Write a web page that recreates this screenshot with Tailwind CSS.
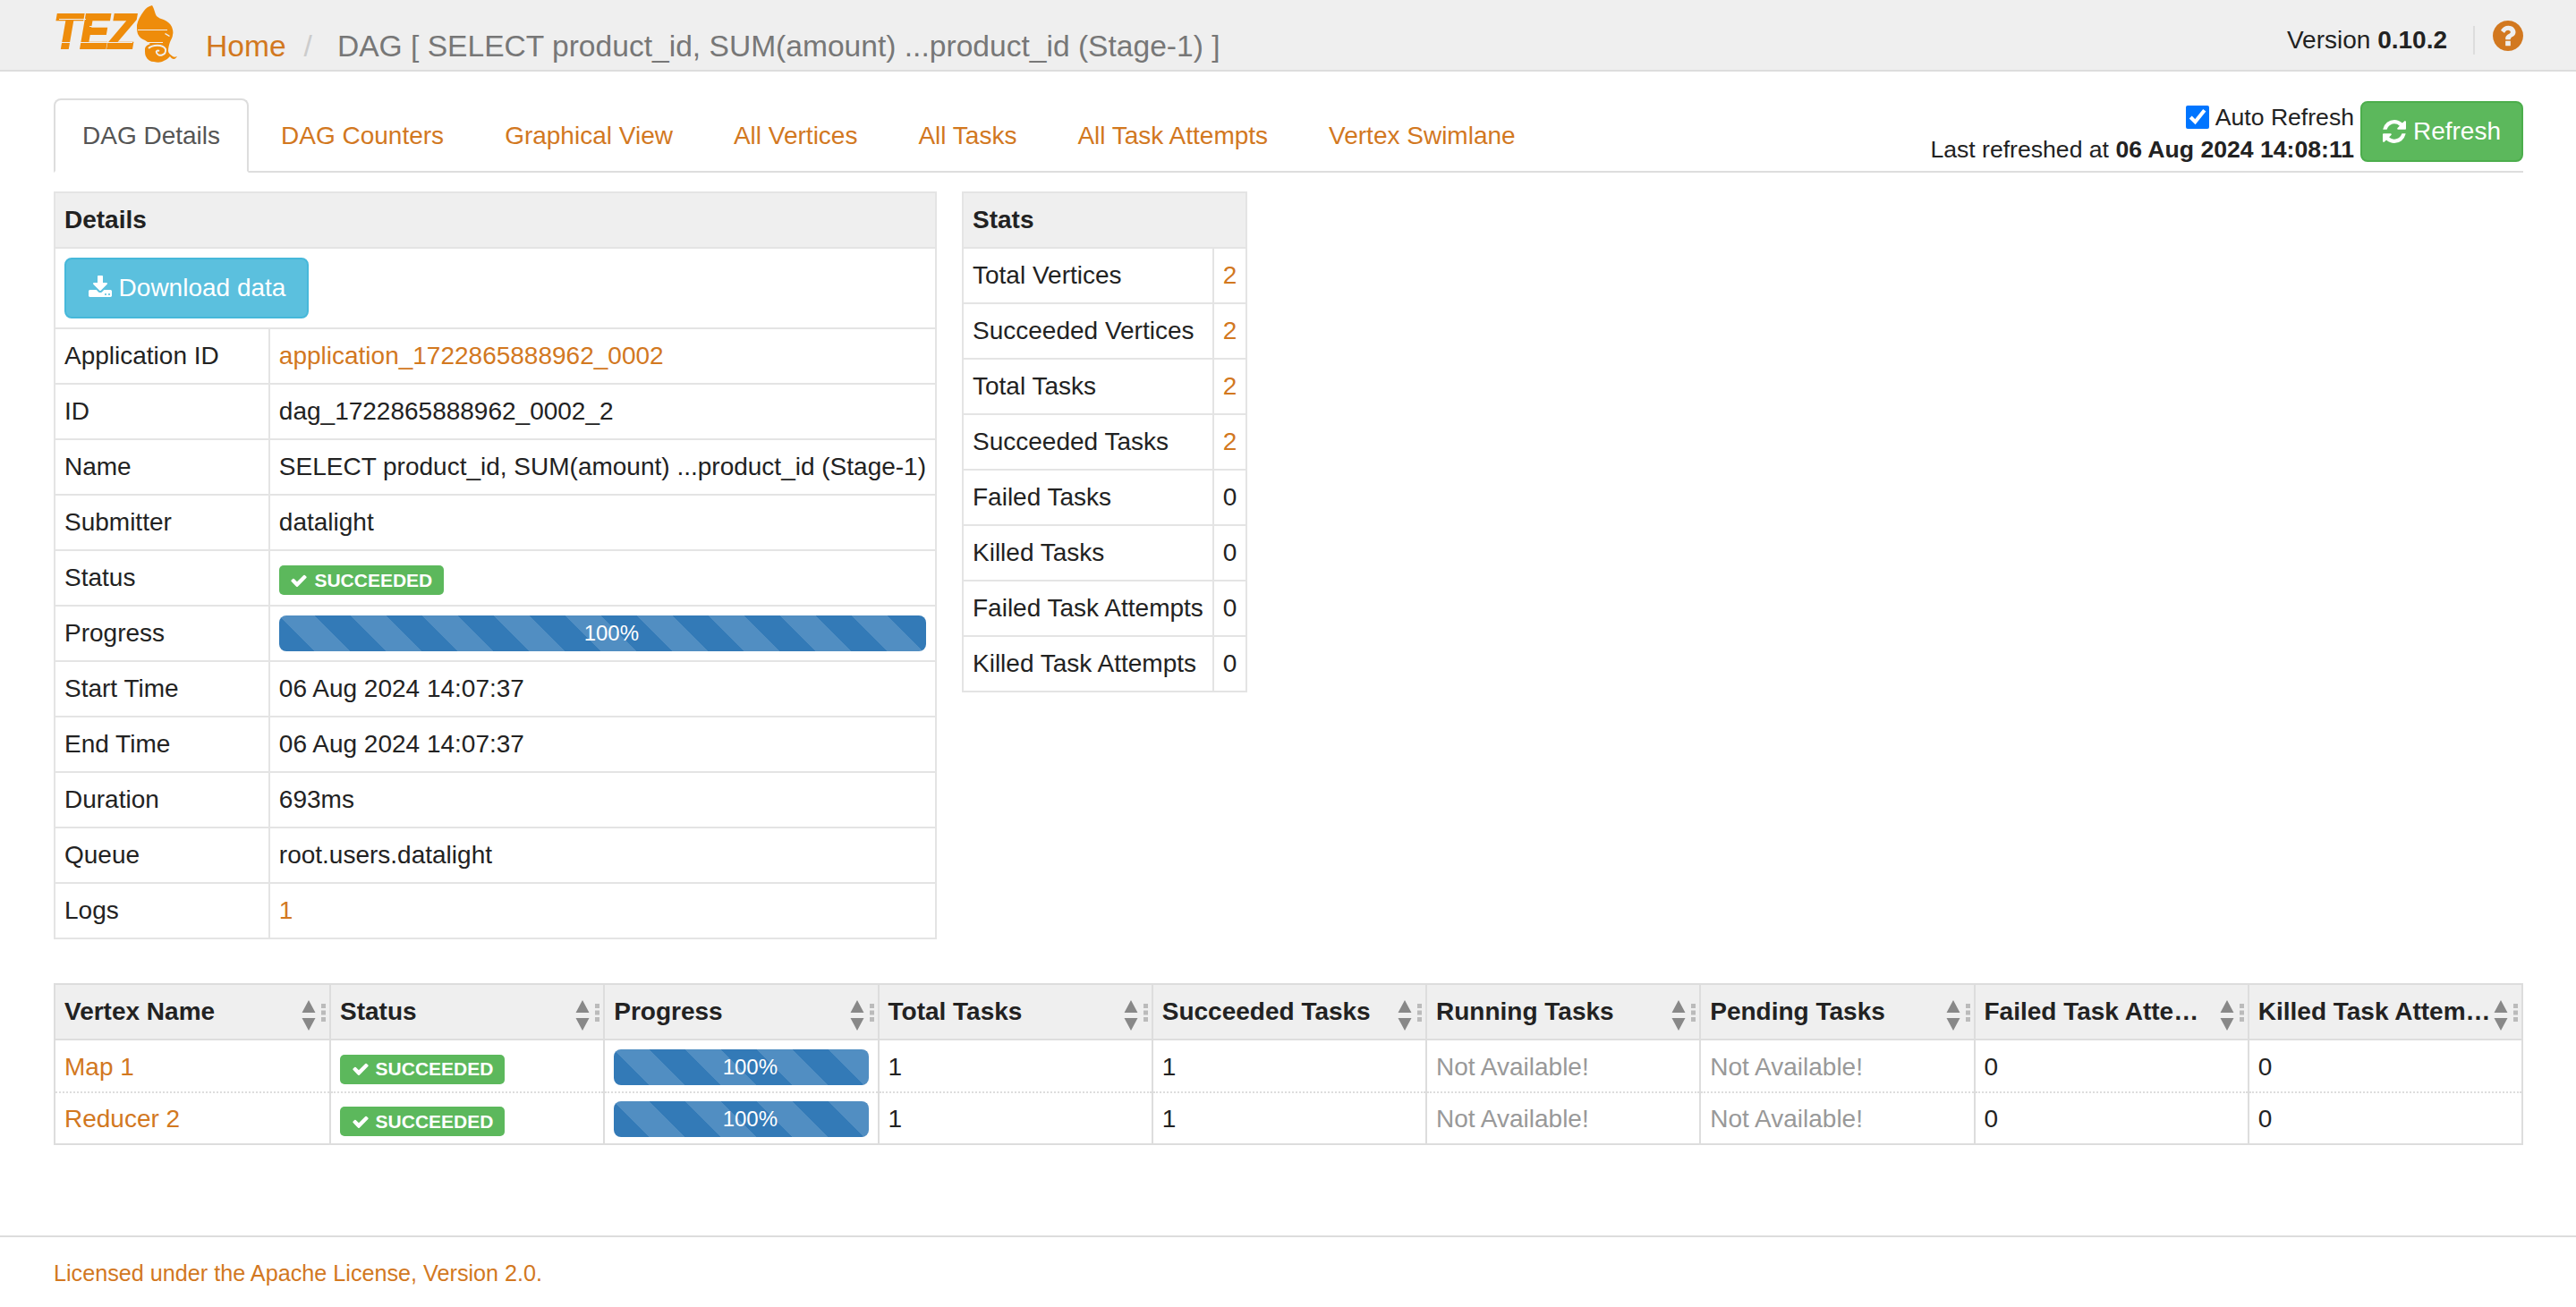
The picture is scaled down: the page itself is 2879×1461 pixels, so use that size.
<!DOCTYPE html>
<html lang="en">
<head>
  <meta charset="UTF-8">
  <title>Tez UI</title>
  <script src="https://cdn.jsdelivr.net/npm/@tailwindcss/browser@4"></script>
</head>
<body class="bg-white min-h-screen font-['Liberation_Sans',Arial,sans-serif] text-[28px] leading-[40px] text-[#222]">

  <!-- Top bar -->
  <header class="h-[80px] bg-[#efefef] border-b-2 border-[#ddd] pl-[60px] pr-[59px] flex items-start">
    <div class="relative w-[140px] h-[78px] shrink-0">
      <span class="absolute left-[0px] top-[3px] origin-left scale-x-[0.88] font-bold italic text-[56px] leading-[64px] tracking-[-1px] text-[#ee8c0b] [-webkit-text-stroke:2px_#ee8c0b]">TEZ</span>
      <div class="absolute left-[6px] top-[21px] w-[30px] h-[1px] bg-[#efefef]"></div>
      <div class="absolute left-[40px] top-[29px] w-[28px] h-[1px] bg-[#efefef]"></div>
      <div class="absolute left-0 top-[47px] w-[88px] h-[1px] bg-[#efefef]"></div>
      <svg class="absolute left-[92px] top-[5px]" width="48" height="66" viewBox="0 0 48 66">
        <path fill="#ee8c0b" d="M18 1C14 2 11 4 9 7C5 12 2 18 1 23C1 27 1 30 2 33C4 37 7 39 10 40C12 41 14 43 16 44C13 45 10 47 10 50C10 54 10 56 11 58C13 62 16 64 20 64C24 65 28 65 31 63C34 62 36 60 38 58C39 60 41 61 42 61C44 61 45 59 46 58C44 59 42 59 41 58C38 56 36 54 36 52C36 48 37 45 38 42C39 39 41 37 41 34C42 31 41 28 40 25C38 21 35 19 31 17C28 16 25 15 23 13C21 10 21 6 18 1Z"/>
        <path fill="none" stroke="#efefef" stroke-width="2" d="M14 49C18 45 30 44 33 50C34 57 25 59 23 54C22 52 24 51 26 52"/>
        <path fill="#efefef" d="M2 28H35V29H2Z M8 42H30V43H8Z M33 32L38 35L37 36L32 33Z"/>
      </svg>
    </div>
    <nav class="flex items-baseline pt-[27px] ml-[30px] text-[33.6px] leading-[50px] whitespace-nowrap">
      <a href="#" class="text-[#d2781f]">Home</a>
      <span class="text-[#ccc] ml-[20px] mr-[28px]">/</span>
      <span class="text-[#777]">DAG [ SELECT product_id, SUM(amount) ...product_id (Stage-1) ]</span>
    </nav>
    <div class="ml-auto flex items-start pt-[25px]">
      <span class="text-[#222]">Version <b>0.10.2</b></span>
      <span class="w-[2px] h-[32px] bg-[#ddd] ml-[29px] mr-[20px] mt-[4px]"></span>
      <svg class="-mt-[2px]" width="34" height="34" viewBox="128 128 1536 1536"><path fill="#d2781f" d="M1024 1376v-192q0-14-9-23t-23-9h-192q-14 0-23 9t-9 23v192q0 14 9 23t23 9h192q14 0 23-9t9-23zm256-672q0-88-55.500-163t-138.500-116-170-41q-243 0-371 213-15 24 8 42l132 100q7 6 19 6 16 0 25-12 53-68 86-92 34-24 86-24 48 0 85.500 26t37.500 59q0 38-20 61t-68 45q-63 28-115.500 86.500t-52.500 125.500v36q0 14 9 23t23 9h192q14 0 23-9t9-23q0-19 21.500-49.500t54.500-49.500q32-18 49-28.500t46-35 44.500-48 28-60.500 12.500-81zm384 192q0 209-103 385.500t-279.500 279.500-385.500 103-385.500-103-279.500-279.500-103-385.500 103-385.500 279.500-279.500 385.500-103 385.500 103 279.500 279.500 103 385.500z"/></svg>
    </div>
  </header>

  <main class="pl-[60px] pr-[59px] pt-[30px] w-[2879px]">
    <!-- Tabs -->
    <div class="relative flex items-end h-[83px] border-b-2 border-[#ddd]">
      <div class="flex gap-[4px] -mb-[2px]">
        <a class="h-[83px] px-[30px] border-2 border-[#ddd] border-b-white bg-white rounded-t-[8px] text-[#555] flex items-center" href="#">DAG Details</a>
        <a class="h-[83px] px-[30px] border-2 border-transparent text-[#d2781f] flex items-center" href="#">DAG Counters</a>
        <a class="h-[83px] px-[30px] border-2 border-transparent text-[#d2781f] flex items-center" href="#">Graphical View</a>
        <a class="h-[83px] px-[30px] border-2 border-transparent text-[#d2781f] flex items-center" href="#">All Vertices</a>
        <a class="h-[83px] px-[30px] border-2 border-transparent text-[#d2781f] flex items-center" href="#">All Tasks</a>
        <a class="h-[83px] px-[30px] border-2 border-transparent text-[#d2781f] flex items-center" href="#">All Task Attempts</a>
        <a class="h-[83px] px-[30px] border-2 border-transparent text-[#d2781f] flex items-center" href="#">Vertex Swimlane</a>
      </div>
      <div class="ml-auto self-start flex items-start gap-[7px] pt-[3px]">
        <div class="text-right text-[26.6px] leading-[36px]">
          <label class="flex items-center justify-end gap-[7px]">
            <input type="checkbox" checked class="w-[26px] h-[26px] accent-[#0075ff]">
            <span>Auto Refresh</span>
          </label>
          <div>Last refreshed at <b>06 Aug 2024 14:08:11</b></div>
        </div>
        <button class="w-[182px] h-[68px] rounded-[8px] bg-[#5cb85c] border-2 border-[#4cae4c] text-white flex items-center justify-center gap-[8px]">
          <svg width="26" height="26" viewBox="128 128 1536 1536"><path fill="#fff" d="M1639 1056q0 5-1 7-64 268-268 434.500t-478 166.500q-146 0-282.500-55t-243.500-157l-129 129q-19 19-45 19t-45-19-19-45v-448q0-26 19-45t45-19h448q26 0 45 19t19 45-19 45l-137 137q71 66 161 102t187 36q134 0 250-65t186-179q11-17 53-117 8-23 30-23h192q13 0 22.500 9.500t9.500 22.500zm25-800v448q0 26-19 45t-45 19h-448q-26 0-45-19t-19-45 19-45l138-138q-148-137-349-137-134 0-250 65t-186 179q-11 17-53 117-8 23-30 23h-199q-13 0-22.500-9.500t-9.500-22.500v-7q65-268 270-434.500t480-166.500q146 0 284 55.500t245 156.500l130-129q19-19 45-19t45 19 19 45z"/></svg>
          Refresh
        </button>
      </div>
    </div>

    <!-- Details + Stats -->
    <div class="flex items-start gap-[28px] mt-[21px]">
      <table class="w-[987px] border-collapse">
        <tbody>
          <tr class="h-[62px] bg-[#efefef]"><th colspan="2" class="border-2 border-[#e4e4e4] px-[10px] text-left font-bold">Details</th></tr>
          <tr class="h-[90px]"><td colspan="2" class="border-2 border-[#e4e4e4] px-[10px] py-[10px]">
            <button class="w-[273px] h-[68px] rounded-[8px] bg-[#5bc0de] border-2 border-[#46b8da] text-white flex items-center justify-center gap-[7px]">
              <svg width="28" height="28" viewBox="0 0 1792 1792"><path fill="#fff" d="M1344 1344q0-26-19-45t-45-19-45 19-19 45 19 45 45 19 45-19 19-45zm256 0q0-26-19-45t-45-19-45 19-19 45 19 45 45 19 45-19 19-45zm128-224v320q0 40-28 68t-68 28h-1472q-40 0-68-28t-28-68v-320q0-40 28-68t68-28h465l135 136q58 56 136 56t136-56l136-136h464q40 0 68 28t28 68zm-325-569q17 41-14 70l-448 448q-18 19-45 19t-45-19l-448-448q-31-29-14-70 17-39 59-39h256v-448q0-26 19-45t45-19h256q26 0 45 19t19 45v448h256q42 0 59 39z"/></svg>
              Download data
            </button>
          </td></tr>
          <tr class="h-[62px]"><td class="w-[241px] border-2 border-[#e4e4e4] px-[10px]">Application ID</td><td class="border-2 border-[#e4e4e4] px-[10px]"><a href="#" class="text-[#d2781f]">application_1722865888962_0002</a></td></tr>
          <tr class="h-[62px]"><td class="border-2 border-[#e4e4e4] px-[10px]">ID</td><td class="border-2 border-[#e4e4e4] px-[10px]">dag_1722865888962_0002_2</td></tr>
          <tr class="h-[62px]"><td class="border-2 border-[#e4e4e4] px-[10px]">Name</td><td class="border-2 border-[#e4e4e4] px-[10px] whitespace-nowrap">SELECT product_id, SUM(amount) ...product_id (Stage-1)</td></tr>
          <tr class="h-[62px]"><td class="border-2 border-[#e4e4e4] px-[10px]">Submitter</td><td class="border-2 border-[#e4e4e4] px-[10px]">datalight</td></tr>
          <tr class="h-[62px]"><td class="border-2 border-[#e4e4e4] px-[10px]">Status</td><td class="border-2 border-[#e4e4e4] px-[10px]">
            <span class="mt-[5px] w-[184px] h-[33px] rounded-[5px] bg-[#5cb85c] text-white font-bold text-[21px] flex items-center justify-center gap-[7px]">
              <svg width="20" height="20" viewBox="0 0 1792 1792"><path fill="#fff" d="M1671 566q0 40-28 68l-724 724-136 136q-28 28-68 28t-68-28l-136-136-362-362q-28-28-28-68t28-68l136-136q28-28 68-28t68 28l294 295 656-657q28-28 68-28t68 28l136 136q28 28 28 68z"/></svg>SUCCEEDED</span>
          </td></tr>
          <tr class="h-[62px]"><td class="border-2 border-[#e4e4e4] px-[10px]">Progress</td><td class="border-2 border-[#e4e4e4] px-[10px]">
            <div class="h-[40px] w-[723px] rounded-[8px] bg-[#337ab7] bg-[linear-gradient(45deg,rgba(255,255,255,.15)_25%,transparent_25%,transparent_50%,rgba(255,255,255,.15)_50%,rgba(255,255,255,.15)_75%,transparent_75%,transparent)] bg-[length:80px_80px] text-white text-[24px] leading-[40px] text-center pl-[20px]">100%</div>
          </td></tr>
          <tr class="h-[62px]"><td class="border-2 border-[#e4e4e4] px-[10px]">Start Time</td><td class="border-2 border-[#e4e4e4] px-[10px]">06 Aug 2024 14:07:37</td></tr>
          <tr class="h-[62px]"><td class="border-2 border-[#e4e4e4] px-[10px]">End Time</td><td class="border-2 border-[#e4e4e4] px-[10px]">06 Aug 2024 14:07:37</td></tr>
          <tr class="h-[62px]"><td class="border-2 border-[#e4e4e4] px-[10px]">Duration</td><td class="border-2 border-[#e4e4e4] px-[10px]">693ms</td></tr>
          <tr class="h-[62px]"><td class="border-2 border-[#e4e4e4] px-[10px]">Queue</td><td class="border-2 border-[#e4e4e4] px-[10px]">root.users.datalight</td></tr>
          <tr class="h-[62px]"><td class="border-2 border-[#e4e4e4] px-[10px]">Logs</td><td class="border-2 border-[#e4e4e4] px-[10px]"><a href="#" class="text-[#d2781f]">1</a></td></tr>
        </tbody>
      </table>

      <table class="w-[319px] border-collapse">
        <tbody>
          <tr class="h-[62px] bg-[#efefef]"><th colspan="2" class="border-2 border-[#e4e4e4] px-[10px] text-left font-bold">Stats</th></tr>
          <tr class="h-[62px]"><td class="border-2 border-[#e4e4e4] px-[10px] whitespace-nowrap">Total Vertices</td><td class="w-[38px] border-2 border-[#e4e4e4] px-[10px]"><a href="#" class="text-[#d2781f]">2</a></td></tr>
          <tr class="h-[62px]"><td class="border-2 border-[#e4e4e4] px-[10px] whitespace-nowrap">Succeeded Vertices</td><td class="border-2 border-[#e4e4e4] px-[10px]"><a href="#" class="text-[#d2781f]">2</a></td></tr>
          <tr class="h-[62px]"><td class="border-2 border-[#e4e4e4] px-[10px] whitespace-nowrap">Total Tasks</td><td class="border-2 border-[#e4e4e4] px-[10px]"><a href="#" class="text-[#d2781f]">2</a></td></tr>
          <tr class="h-[62px]"><td class="border-2 border-[#e4e4e4] px-[10px] whitespace-nowrap">Succeeded Tasks</td><td class="border-2 border-[#e4e4e4] px-[10px]"><a href="#" class="text-[#d2781f]">2</a></td></tr>
          <tr class="h-[62px]"><td class="border-2 border-[#e4e4e4] px-[10px] whitespace-nowrap">Failed Tasks</td><td class="border-2 border-[#e4e4e4] px-[10px]">0</td></tr>
          <tr class="h-[62px]"><td class="border-2 border-[#e4e4e4] px-[10px] whitespace-nowrap">Killed Tasks</td><td class="border-2 border-[#e4e4e4] px-[10px]">0</td></tr>
          <tr class="h-[62px]"><td class="border-2 border-[#e4e4e4] px-[10px] whitespace-nowrap">Failed Task Attempts</td><td class="border-2 border-[#e4e4e4] px-[10px]">0</td></tr>
          <tr class="h-[62px]"><td class="border-2 border-[#e4e4e4] px-[10px] whitespace-nowrap">Killed Task Attempts</td><td class="border-2 border-[#e4e4e4] px-[10px]">0</td></tr>
        </tbody>
      </table>
    </div>

    <!-- Vertices table -->
    <table class="w-full mt-[49px] table-fixed border-collapse">
      <thead>
        <tr class="h-[62px] bg-[#efefef] font-bold">
          <th class="w-[308px] relative border-2 border-[#ddd] pl-[10px] pr-[50px] text-left font-bold truncate">Vertex Name
            <svg class="absolute right-[3px] top-[16px]" width="28" height="36" viewBox="0 0 28 36"><path fill="#888" d="M8 1L15.500 15H0.500Z M8 35L0.500 21H15.500Z"/><path fill="#bbb" d="M22 5H27V10H22Z M22 12.500H27V17.500H22Z M22 20H27V25H22Z"/></svg></th>
          <th class="relative border-2 border-[#ddd] pl-[10px] pr-[50px] text-left font-bold truncate">Status
            <svg class="absolute right-[3px] top-[16px]" width="28" height="36" viewBox="0 0 28 36"><path fill="#888" d="M8 1L15.500 15H0.500Z M8 35L0.500 21H15.500Z"/><path fill="#bbb" d="M22 5H27V10H22Z M22 12.500H27V17.500H22Z M22 20H27V25H22Z"/></svg></th>
          <th class="relative border-2 border-[#ddd] pl-[10px] pr-[50px] text-left font-bold truncate">Progress
            <svg class="absolute right-[3px] top-[16px]" width="28" height="36" viewBox="0 0 28 36"><path fill="#888" d="M8 1L15.500 15H0.500Z M8 35L0.500 21H15.500Z"/><path fill="#bbb" d="M22 5H27V10H22Z M22 12.500H27V17.500H22Z M22 20H27V25H22Z"/></svg></th>
          <th class="relative border-2 border-[#ddd] pl-[10px] pr-[50px] text-left font-bold truncate">Total Tasks
            <svg class="absolute right-[3px] top-[16px]" width="28" height="36" viewBox="0 0 28 36"><path fill="#888" d="M8 1L15.500 15H0.500Z M8 35L0.500 21H15.500Z"/><path fill="#bbb" d="M22 5H27V10H22Z M22 12.500H27V17.500H22Z M22 20H27V25H22Z"/></svg></th>
          <th class="relative border-2 border-[#ddd] pl-[10px] pr-[36px] text-left font-bold truncate">Succeeded Tasks
            <svg class="absolute right-[3px] top-[16px]" width="28" height="36" viewBox="0 0 28 36"><path fill="#888" d="M8 1L15.500 15H0.500Z M8 35L0.500 21H15.500Z"/><path fill="#bbb" d="M22 5H27V10H22Z M22 12.500H27V17.500H22Z M22 20H27V25H22Z"/></svg></th>
          <th class="relative border-2 border-[#ddd] pl-[10px] pr-[36px] text-left font-bold truncate">Running Tasks
            <svg class="absolute right-[3px] top-[16px]" width="28" height="36" viewBox="0 0 28 36"><path fill="#888" d="M8 1L15.500 15H0.500Z M8 35L0.500 21H15.500Z"/><path fill="#bbb" d="M22 5H27V10H22Z M22 12.500H27V17.500H22Z M22 20H27V25H22Z"/></svg></th>
          <th class="relative border-2 border-[#ddd] pl-[10px] pr-[36px] text-left font-bold truncate">Pending Tasks
            <svg class="absolute right-[3px] top-[16px]" width="28" height="36" viewBox="0 0 28 36"><path fill="#888" d="M8 1L15.500 15H0.500Z M8 35L0.500 21H15.500Z"/><path fill="#bbb" d="M22 5H27V10H22Z M22 12.500H27V17.500H22Z M22 20H27V25H22Z"/></svg></th>
          <th class="relative border-2 border-[#ddd] pl-[10px] pr-[36px] text-left font-bold truncate">Failed Task Attempts
            <svg class="absolute right-[3px] top-[16px]" width="28" height="36" viewBox="0 0 28 36"><path fill="#888" d="M8 1L15.500 15H0.500Z M8 35L0.500 21H15.500Z"/><path fill="#bbb" d="M22 5H27V10H22Z M22 12.500H27V17.500H22Z M22 20H27V25H22Z"/></svg></th>
          <th class="relative border-2 border-[#ddd] pl-[10px] pr-[28px] text-left font-bold truncate">Killed Task Attempts
            <svg class="absolute right-[3px] top-[16px]" width="28" height="36" viewBox="0 0 28 36"><path fill="#888" d="M8 1L15.500 15H0.500Z M8 35L0.500 21H15.500Z"/><path fill="#bbb" d="M22 5H27V10H22Z M22 12.500H27V17.500H22Z M22 20H27V25H22Z"/></svg></th>
        </tr>
      </thead>
      <tbody>
        <tr class="h-[59px] border-b-2 border-dotted border-[#ddd]">
          <td class="border-x-2 border-[#ddd] px-[10px] pt-[2px]"><a href="#" class="text-[#d2781f]">Map 1</a></td>
          <td class="border-x-2 border-[#ddd] px-[10px] pt-[2px]">
            <span class="mt-[5px] w-[184px] h-[33px] rounded-[5px] bg-[#5cb85c] text-white font-bold text-[21px] flex items-center justify-center gap-[7px]">
              <svg width="20" height="20" viewBox="0 0 1792 1792"><path fill="#fff" d="M1671 566q0 40-28 68l-724 724-136 136q-28 28-68 28t-68-28l-136-136-362-362q-28-28-28-68t28-68l136-136q28-28 68-28t68 28l294 295 656-657q28-28 68-28t68 28l136 136q28 28 28 68z"/></svg>SUCCEEDED</span>
          </td>
          <td class="border-x-2 border-[#ddd] px-[10px] pt-[2px]">
            <div class="h-[40px] rounded-[8px] bg-[#337ab7] bg-[linear-gradient(45deg,rgba(255,255,255,.15)_25%,transparent_25%,transparent_50%,rgba(255,255,255,.15)_50%,rgba(255,255,255,.15)_75%,transparent_75%,transparent)] bg-[length:80px_80px] text-white text-[24px] leading-[40px] text-center pl-[20px]">100%</div>
          </td>
          <td class="border-x-2 border-[#ddd] px-[10px] pt-[2px]">1</td>
          <td class="border-x-2 border-[#ddd] px-[10px] pt-[2px]">1</td>
          <td class="border-x-2 border-[#ddd] px-[10px] pt-[2px] text-[#999]">Not Available!</td>
          <td class="border-x-2 border-[#ddd] px-[10px] pt-[2px] text-[#999]">Not Available!</td>
          <td class="border-x-2 border-[#ddd] px-[10px] pt-[2px]">0</td>
          <td class="border-x-2 border-[#ddd] px-[10px] pt-[2px]">0</td>
        </tr>
        <tr class="h-[58px] border-b-2 border-[#ddd]">
          <td class="border-x-2 border-[#ddd] px-[10px] pt-[2px]"><a href="#" class="text-[#d2781f]">Reducer 2</a></td>
          <td class="border-x-2 border-[#ddd] px-[10px] pt-[2px]">
            <span class="mt-[5px] w-[184px] h-[33px] rounded-[5px] bg-[#5cb85c] text-white font-bold text-[21px] flex items-center justify-center gap-[7px]">
              <svg width="20" height="20" viewBox="0 0 1792 1792"><path fill="#fff" d="M1671 566q0 40-28 68l-724 724-136 136q-28 28-68 28t-68-28l-136-136-362-362q-28-28-28-68t28-68l136-136q28-28 68-28t68 28l294 295 656-657q28-28 68-28t68 28l136 136q28 28 28 68z"/></svg>SUCCEEDED</span>
          </td>
          <td class="border-x-2 border-[#ddd] px-[10px] pt-[2px]">
            <div class="h-[40px] rounded-[8px] bg-[#337ab7] bg-[linear-gradient(45deg,rgba(255,255,255,.15)_25%,transparent_25%,transparent_50%,rgba(255,255,255,.15)_50%,rgba(255,255,255,.15)_75%,transparent_75%,transparent)] bg-[length:80px_80px] text-white text-[24px] leading-[40px] text-center pl-[20px]">100%</div>
          </td>
          <td class="border-x-2 border-[#ddd] px-[10px] pt-[2px]">1</td>
          <td class="border-x-2 border-[#ddd] px-[10px] pt-[2px]">1</td>
          <td class="border-x-2 border-[#ddd] px-[10px] pt-[2px] text-[#999]">Not Available!</td>
          <td class="border-x-2 border-[#ddd] px-[10px] pt-[2px] text-[#999]">Not Available!</td>
          <td class="border-x-2 border-[#ddd] px-[10px] pt-[2px]">0</td>
          <td class="border-x-2 border-[#ddd] px-[10px] pt-[2px]">0</td>
        </tr>
      </tbody>
    </table>
  </main>

  <footer class="mt-[101px] border-t-2 border-[#ddd] px-[60px] pt-[20px] text-[25.2px] leading-[40px]">
    <a href="#" class="text-[#d2781f]">Licensed under the Apache License, Version 2.0.</a>
  </footer>
</body>
</html>
